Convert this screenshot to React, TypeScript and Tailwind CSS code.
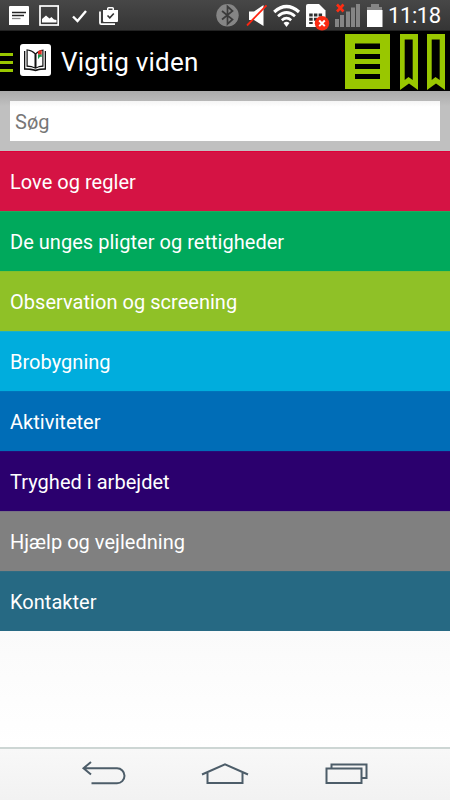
import React, { useState } from 'react';

const categories = [
    { title: 'Love og regler', color: 'bg-[#d51344] border-[#de0038]' },
    { title: 'De unges pligter og rettigheder', color: 'bg-[#00a95c] border-[#22a95c]' },
    { title: 'Observation og screening', color: 'bg-[#8fc127] border-[#7fc02e]' },
    { title: 'Brobygning', color: 'bg-[#00addd] border-[#1fb0c4]' },
    { title: 'Aktiviteter', color: 'bg-[#006db7] border-[#0074bb]' },
    { title: 'Tryghed i arbejdet', color: 'bg-[#2b006e] border-[#270c78]' },
    { title: 'Hjælp og vejledning', color: 'bg-[#808080] border-[#777283]' },
    { title: 'Kontakter', color: 'bg-[#266983] border-[#306c83]' },
];

function StatusBar() {
    return (
        <div className="flex h-[31px] shrink-0 items-start border-b border-[#222] bg-gradient-to-b from-[#474747] to-[#353535] text-white">
            <svg className="ml-[9px] mt-[5px]" width="20" height="21" viewBox="0 0 20 21">
                <path fill="#fff" d="M1 1h18q1 0 1 1v18H0V2q0-1 1-1z" />
                <path stroke="#222" strokeWidth="1.3" d="M3 7.5h14M3 10.5h12" />
                <path stroke="#888" strokeWidth="1.3" d="M3 13.5h8.5" />
            </svg>
            <svg className="ml-[10px] mt-[5px]" width="20" height="21" viewBox="0 0 20 21" fill="none">
                <rect x="1" y="1" width="18.2" height="19" stroke="#fff" strokeWidth="1.7" />
                <path fill="#fff" d="M3 17.5V14l4-3.5 3.5 3 2-1.5 2.5 2.5 2.5.5v2.5z" />
            </svg>
            <svg className="ml-[13px] mt-[9px]" width="16" height="14" viewBox="0 0 16 14">
                <path d="M1 7.500l4.500 4.500L14 2" fill="none" stroke="#fff" strokeWidth="2.400" />
            </svg>
            <svg className="ml-[11px] mt-[6px]" width="20" height="20" viewBox="0 0 20 20">
                <path d="M1 5.500V17q0 1.200 1.200 1.200H16" fill="none" stroke="#fff" strokeWidth="1.800" />
                <path fill="#fff" fillRule="evenodd" d="M4 4h4V2.500Q8 1 9.500 1h4Q15 1 15 2.500V4h4v11q0 1-1 1H5q-1 0-1-1zm5.500 0h4V2.500h-4z" />
                <path d="M8.500 9.500l2.300 2.300 4-4.300" fill="none" stroke="#333" strokeWidth="1.600" />
            </svg>
            <svg className="ml-[97px] mt-[3px]" width="24" height="24" viewBox="0 0 24 24">
                <circle cx="11.500" cy="12.300" r="11.200" fill="#858585" />
                <path d="M6 8l10.500 8.500-5 4.500V3.500l5 4.500L6 16.500" fill="none" stroke="#3b3b3b" strokeWidth="1.700" />
            </svg>
            <svg className="ml-[6px] mt-[4px]" width="22" height="23" viewBox="0 0 22 23">
                <path fill="#fff" d="M3 7.500h5L17.500 1v21L8 16H3z" />
                <path stroke="#ff2511" strokeWidth="1.800" d="M1 21.500L20.500 1.300" />
            </svg>
            <svg className="ml-[5px] mt-[4px]" width="28" height="24" viewBox="0 0 28 24" fill="none" stroke="#fff">
                <path strokeWidth="3.200" d="M1.200 8Q13.500-3 26 8" />
                <path strokeWidth="2.800" d="M5 12.300q8.500-7.500 17 0" />
                <path strokeWidth="2.600" d="M8.800 16.300q4.700-4.200 9.400 0" />
                <path fill="#fff" stroke="none" d="M10.500 19q3-2.500 6 0l-3 4z" />
            </svg>
            <svg className="ml-[5px] mt-[4px]" width="24" height="27" viewBox="0 0 24 27">
                <path fill="#fff" d="M2 0h11l6.500 6.500V23H0V2q0-2 2-2z" />
                <path stroke="#303030" strokeWidth="3" strokeDasharray="3.500 1.200" d="M3.200 11h13M3.200 15.300h13" />
                <path fill="#303030" d="M3.200 18h3.500v2H3.200z" />
                <circle cx="16" cy="19.300" r="7.200" fill="#fa2b12" />
                <path stroke="#fff" strokeWidth="2" d="M13.200 16.500l5.600 5.600m0-5.600l-5.600 5.600" />
            </svg>
            <svg className="ml-[5px] mt-[3px]" width="26" height="25" viewBox="0 0 26 25">
                <path fill="#858585" d="M0 16h4v8H0zM5 12h4v12H5zM11 8.500h4V24h-4zM16 4.500h4V24h-4zM21 1h4v23h-4z" />
                <path stroke="#ff2d13" strokeWidth="2.600" d="M2 1.500l6.500 7m0-7L2 8.500" />
            </svg>
            <svg className="ml-[6px] mt-[3px]" width="16" height="25" viewBox="0 0 16 25">
                <path fill="#858585" d="M4 1h8v3h3v3H0V4h4z" />
                <path fill="#fff" d="M0 7h15.500v17H0z" />
            </svg>
            <span className="ml-[5px] mt-px whitespace-nowrap text-[22px] leading-[30px] tracking-[-0.4px]">11:18</span>
        </div>
    );
}

function BookmarkIcon({ className }: { className: string }) {
    return (
        <svg className={className} width="18" height="56" viewBox="0 0 18 56">
            <path fill="#99c700" fillRule="evenodd" d="M0 0h18v56l-9-6.500L0 56zM4.700 5.500V46L8.500 43l4.200 3V5.500z" />
        </svg>
    );
}

function Header() {
    return (
        <header className="flex h-[60px] shrink-0 items-start bg-black text-white">
            <button aria-label="Menu" className="mt-[22px] flex w-[13px] flex-col gap-[5px]">
                <span className="h-[3px] w-full bg-[#99c700]" />
                <span className="h-[3px] w-full bg-[#99c700]" />
                <span className="h-[3px] w-full bg-[#99c700]" />
            </button>
            <svg className="ml-[7px] mt-[13px]" width="31" height="32" viewBox="0 0 31 32">
                <rect width="31" height="32" rx="3" fill="#fff" />
                <path fill="#111" d="M4 7h1.300v17.200q6 0 10.200 1.300 4.200-1.300 9.200-1.300V7H26v18.700q-6 0-8.500 1l-2 .6-2-.6q-3.500-1-9.500-1z" />
                <path fill="#111" fillRule="evenodd" d="M6.500 5.200q6 .6 9 4 2.500-3 8-3.800v17.400q-5 0-8 2-3.500-2-9-2zM7.700 6.600v15q4.300.2 6.800 1.600V10q-2.500-2.700-6.800-3.400zM22.300 6.800q-3.500.8-5.800 3.200v13.200q2.500-1.400 5.800-1.600z" />
                <path fill="#e32b20" d="M18 7.300l3.700-1.600v5H18z" />
                <path fill="#15994c" d="M18 10.500h3.700V13l-1.700-.2-2 2.500z" />
            </svg>
            <h1 className="ml-[10px] mt-[14px] flex-1 whitespace-nowrap text-[26px] leading-[34px] tracking-[0.2px]">Vigtig viden</h1>
            <svg className="mt-[3px]" width="45" height="55" viewBox="0 0 45 55">
                <path fill="#99c700" d="M0 0h45v55H0z" />
                <path fill="#000" d="M10 9.500h25v5.500H10zM10 20h25v5H10zM10 30h25v5H10zM10 40h25v5H10z" />
            </svg>
            <BookmarkIcon className="ml-[10px] mt-[3px]" />
            <BookmarkIcon className="ml-[9px] mr-[5px] mt-[3px]" />
        </header>
    );
}

function NavigationBar() {
    return (
        <nav className="flex h-[53px] shrink-0 items-start border-t-2 border-[#cdd6d4] bg-gradient-to-b from-[#f8f8f8] to-[#f2f2f2]">
            <button aria-label="Tilbage" className="ml-[81px] mt-[12px]">
                <svg width="45" height="26" viewBox="0 0 45 26" fill="none" stroke="#4d5d69" strokeWidth="2">
                    <path d="M10 1L2.500 7.300 10 13.600M2.500 7.300H36a7.500 7.500 0 0 1 0 15H10.500" />
                </svg>
            </button>
            <button aria-label="Hjem" className="ml-[75px] mt-[12px]">
                <svg width="48" height="26" viewBox="0 0 48 26" fill="none" stroke="#4d5d69" strokeWidth="2">
                    <path d="M1 13.500L24 3.300l23 10.200M6.500 12v10h35V12" />
                </svg>
            </button>
            <button aria-label="Seneste apps" className="ml-[76px] mt-[12px]">
                <svg width="44" height="26" viewBox="0 0 44 26" fill="none" stroke="#4d5d69" strokeWidth="2">
                    <path d="M1.500 7.500h35V22h-35zM6.500 7.500v-4h35v13.500h-5" />
                </svg>
            </button>
        </nav>
    );
}

export default function App() {
    const [query, setQuery] = useState('');

    return (
        <div className="flex h-[800px] w-[450px] flex-col overflow-hidden bg-white font-['Roboto',sans-serif]">
            <StatusBar />
            <Header />
            <div className="h-[60px] shrink-0 bg-[#c0c0c0] bg-gradient-to-b from-[#aaa] to-[#c0c0c0] to-25% px-[10px] pt-[10px]">
                <input
                    type="text"
                    placeholder="Søg"
                    value={query}
                    onChange={(e) => setQuery(e.target.value)}
                    className="block h-10 w-full bg-white bg-gradient-to-b from-[#f5f5f5] to-white to-15% px-[5px] pt-px text-[20px] text-black outline-none placeholder:text-[#777]"
                />
            </div>
            <ul>
                {categories.map((category) => (
                    <li key={category.title} className={`flex h-[60px] items-center border-t px-[10px] text-[20px] tracking-[0.03px] text-white ${category.color}`}>
                        {category.title}
                    </li>
                ))}
            </ul>
            <main className="flex-1 bg-gradient-to-b from-[#fafafa] to-white" />
            <NavigationBar />
        </div>
    );
}
